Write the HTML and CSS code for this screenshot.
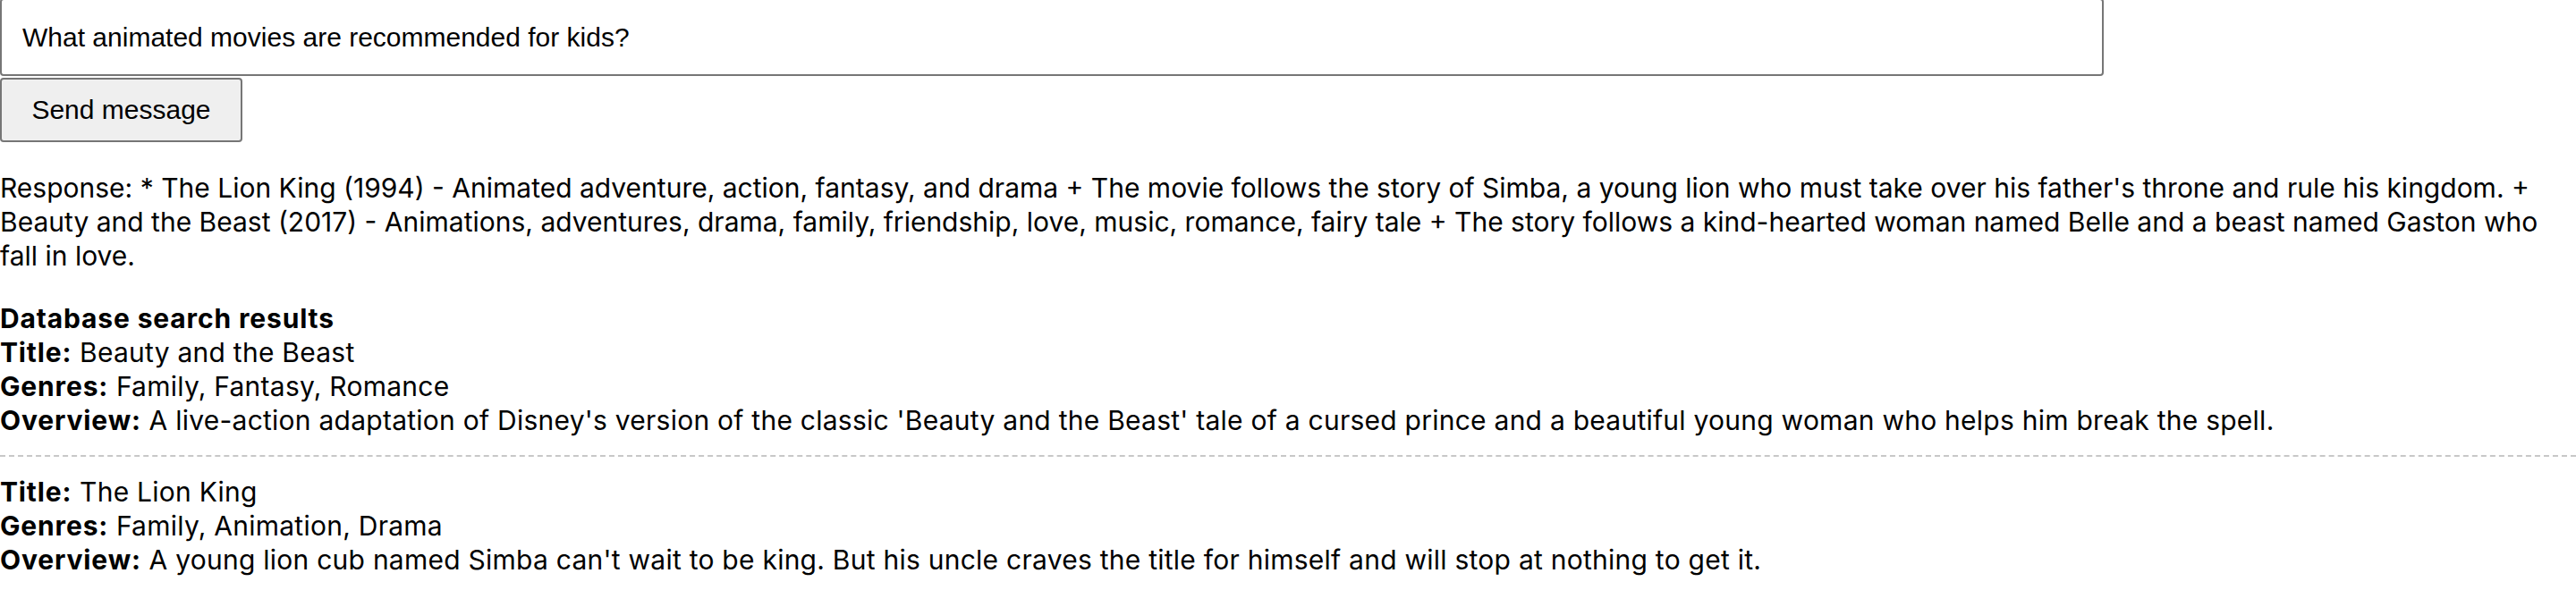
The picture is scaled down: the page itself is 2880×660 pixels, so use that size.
FILE: index.html
```html
<!DOCTYPE html>
<html lang="en">
<head>
<meta charset="utf-8">
<title>Movie chat</title>
<link rel="stylesheet" href="styles.css">
</head>
<body>
<main class="chat">
  <input class="msg-input" type="text" value="What animated movies are recommended for kids?">
  <button class="send-btn" type="button">Send message</button>
  <p class="response">Response: * The Lion King (1994) - Animated adventure, action, fantasy, and drama + The movie follows the story of Simba, a young lion who must take over his father's throne and rule his kingdom. + Beauty and the Beast (2017) - Animations, adventures, drama, family, friendship, love, music, romance, fairy tale + The story follows a kind-hearted woman named Belle and a beast named Gaston who fall in love.</p>
  <section class="results">
    <div class="results-title">Database search results</div>
    <div class="result">
      <div class="field"><b>Title:</b> Beauty and the Beast</div>
      <div class="field"><b>Genres:</b> Family, Fantasy, Romance</div>
      <div class="field"><b>Overview:</b> A live-action adaptation of Disney's version of the classic 'Beauty and the Beast' tale of a cursed prince and a beautiful young woman who helps him break the spell.</div>
    </div>
    <div class="result">
      <div class="field"><b>Title:</b> The Lion King</div>
      <div class="field"><b>Genres:</b> Family, Animation, Drama</div>
      <div class="field"><b>Overview:</b> A young lion cub named Simba can't wait to be king. But his uncle craves the title for himself and will stop at nothing to get it.</div>
    </div>
  </section>
</main>
</body>
</html>
```

FILE: styles.css
```css
html, body {
  margin: 0;
  padding: 0;
  background: #ffffff;
}

body {
  font-family: Inter, "Noto Sans", sans-serif;
  font-size: 30px;
  line-height: 38px;
  color: #000000;
}

.chat {
  display: flex;
  flex-direction: column;
  align-items: flex-start;
}

.msg-input {
  display: block;
  box-sizing: border-box;
  width: 2352px;
  height: 87px;
  margin: -2px 0 0 0;
  padding: 0 23px;
  border: 2px solid #767676;
  border-radius: 4px;
  font-family: "Liberation Sans", Arial, sans-serif;
  font-size: 30px;
  color: #000000;
  background: #ffffff;
  outline: none;
}

.send-btn {
  display: block;
  box-sizing: border-box;
  width: 271px;
  height: 72px;
  margin: 2px 0 0 0;
  padding: 0;
  border: 2px solid #767676;
  border-radius: 4px;
  background: #efefef;
  font-family: "Liberation Sans", Arial, sans-serif;
  font-size: 30px;
  color: #000000;
}

.response {
  margin: 32px 0;
}

.results {
  align-self: stretch;
  letter-spacing: 0.25px;
}

.results-title {
  font-weight: 700;
  letter-spacing: 0.85px;
}

.result {
  padding-bottom: 20px;
  border-bottom: 2px dashed #c8c8c8;
  margin-bottom: 20px;
}

.result:last-child {
  border-bottom: none;
  padding-bottom: 0;
  margin-bottom: 0;
}

.field b {
  font-weight: 700;
  letter-spacing: 0.85px;
}
```
